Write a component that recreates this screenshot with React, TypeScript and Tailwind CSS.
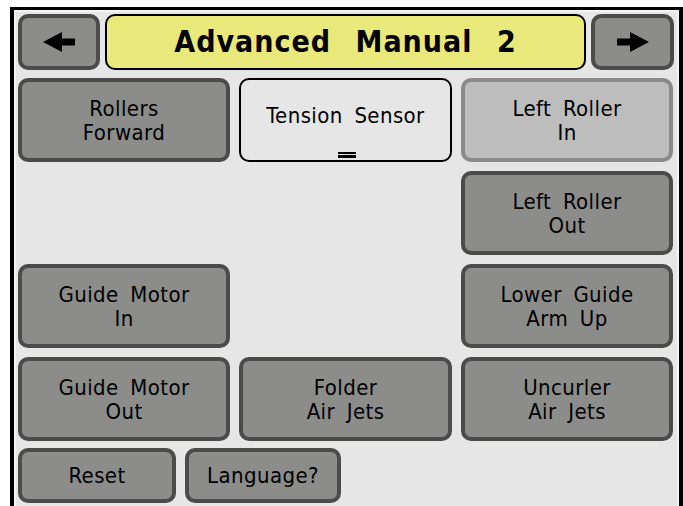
import React from "react";

const font = { fontFamily: '"DejaVu Sans Condensed", "DejaVu Sans", sans-serif' };

function Btn({ lines, className = "" }: { lines: string[]; className?: string }) {
  return (
    <div
      className={`flex flex-col items-center justify-center rounded-[10px] border-4 border-[#4b4b4b] bg-[#8c8d8b] pt-[1px] text-[22px] leading-[24px] tracking-[0.4px] text-black [word-spacing:5px] ${className}`}
    >
      {lines.map((l) => (
        <span key={l}>{l}</span>
      ))}
    </div>
  );
}

function Arrow({ dir }: { dir: "left" | "right" }) {
  return (
    <svg width="32" height="20" viewBox="0 0 32 20" className={dir === "right" ? "" : "-scale-x-100"}>
      <polygon points="0,6.5 13,6.5 13,0 32,10 13,20 13,13.5 0,13.5" fill="#000" />
    </svg>
  );
}

export default function App() {
  return (
    <div className="h-[506px] w-[683px] overflow-hidden bg-white pl-[10px] pt-[7px]" style={font}>
      <div className="h-[499px] border-x-4 border-t-[3px] border-black">
        <div className="flex h-full flex-col border-x-2 border-t-2 border-[#f4f4f4] bg-[#e6e6e6] pl-[2px] pr-[3px] pt-[2px]">
          {/* header */}
          <div className="flex h-[56px] gap-[5px]">
            <div className="flex w-[82px] items-center justify-center rounded-[10px] border-4 border-[#4b4b4b] bg-[#8c8d8b]">
              <Arrow dir="left" />
            </div>
            <div className="flex w-[481px] items-center justify-center rounded-[10px] border-2 border-black bg-[#e8e87b] pb-[1px] text-[30px] font-bold tracking-[1px] text-black [word-spacing:14px]">
              Advanced Manual 2
            </div>
            <div className="flex w-[83px] items-center justify-center rounded-[10px] border-4 border-[#4b4b4b] bg-[#8c8d8b]">
              <Arrow dir="right" />
            </div>
          </div>

          <div className="mt-[8px] grid grid-cols-[212px_213px_212px] grid-rows-[84px_84px_84px_84px] gap-x-[9px] gap-y-[9px]">
            <Btn lines={["Rollers", "Forward"]} />
            <div className="relative flex flex-col items-center overflow-hidden rounded-[10px] border-2 border-black bg-[#e6e6e6] pt-[24px] text-[22px] leading-[24px] tracking-[0.4px] [word-spacing:5px]">
              <span>Tension Sensor</span>
              <div className="absolute bottom-[2px] left-[97px] flex w-[18px] flex-col gap-[1px]">
                <div className="h-[2px] bg-black" />
                <div className="h-[3px] bg-black" />
              </div>
            </div>
            <Btn lines={["Left Roller", "In"]} className="!border-[#8a8a8a] !bg-[#bdbdbd]" />

            <div />
            <div />
            <Btn lines={["Left Roller", "Out"]} />

            <Btn lines={["Guide Motor", "In"]} />
            <div />
            <Btn lines={["Lower Guide", "Arm Up"]} />

            <Btn lines={["Guide Motor", "Out"]} />
            <Btn lines={["Folder", "Air Jets"]} />
            <Btn lines={["Uncurler", "Air Jets"]} />
          </div>

          <div className="mt-[7px] flex h-[55px] gap-[9px]">
            <Btn lines={["Reset"]} className="w-[158px]" />
            <Btn lines={["Language?"]} className="w-[156px] [word-spacing:0px]" />
          </div>
        </div>
      </div>
    </div>
  );
}
